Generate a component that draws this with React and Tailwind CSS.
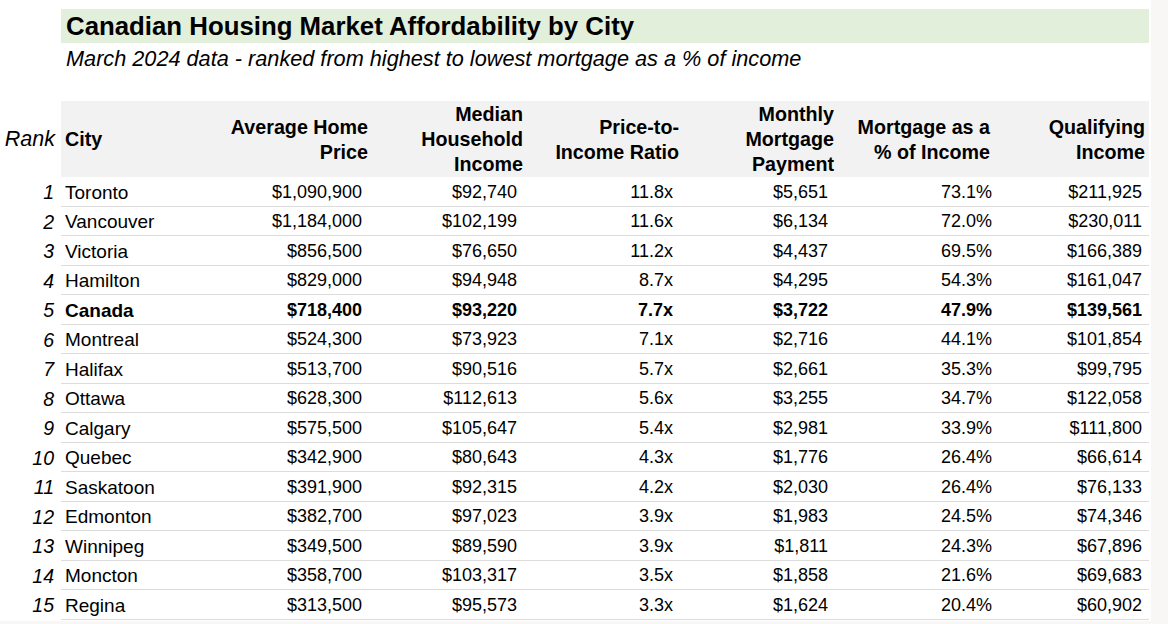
import React from 'react';

const rows = [
  [1, 'Toronto', '$1,090,900', '$92,740', '11.8x', '$5,651', '73.1%', '$211,925'],
  [2, 'Vancouver', '$1,184,000', '$102,199', '11.6x', '$6,134', '72.0%', '$230,011'],
  [3, 'Victoria', '$856,500', '$76,650', '11.2x', '$4,437', '69.5%', '$166,389'],
  [4, 'Hamilton', '$829,000', '$94,948', '8.7x', '$4,295', '54.3%', '$161,047'],
  [5, 'Canada', '$718,400', '$93,220', '7.7x', '$3,722', '47.9%', '$139,561'],
  [6, 'Montreal', '$524,300', '$73,923', '7.1x', '$2,716', '44.1%', '$101,854'],
  [7, 'Halifax', '$513,700', '$90,516', '5.7x', '$2,661', '35.3%', '$99,795'],
  [8, 'Ottawa', '$628,300', '$112,613', '5.6x', '$3,255', '34.7%', '$122,058'],
  [9, 'Calgary', '$575,500', '$105,647', '5.4x', '$2,981', '33.9%', '$111,800'],
  [10, 'Quebec', '$342,900', '$80,643', '4.3x', '$1,776', '26.4%', '$66,614'],
  [11, 'Saskatoon', '$391,900', '$92,315', '4.2x', '$2,030', '26.4%', '$76,133'],
  [12, 'Edmonton', '$382,700', '$97,023', '3.9x', '$1,983', '24.5%', '$74,346'],
  [13, 'Winnipeg', '$349,500', '$89,590', '3.9x', '$1,811', '24.3%', '$67,896'],
  [14, 'Moncton', '$358,700', '$103,317', '3.5x', '$1,858', '21.6%', '$69,683'],
  [15, 'Regina', '$313,500', '$95,573', '3.3x', '$1,624', '20.4%', '$60,902'],
];

const cols = 'grid grid-cols-[150px_161px_155px_156px_155px_156px_155px] w-[1088px]';

const App = () => {
  return (
    <div className="w-[1168px] h-[624px] overflow-hidden flex bg-[#f8f7f6] font-['Liberation_Sans',Arial,sans-serif] text-black">
      <div className="w-[1151px] flex flex-col">
        <div className="bg-white pt-[9px] pb-[28px]">
          {/* Title */}
          <div className="ml-[61px] w-[1088px] h-[34px] bg-[#e2efda] pl-[5px] text-[25.8px] font-bold leading-[35px]">
            Canadian Housing Market Affordability by City
          </div>
          <div className="ml-[66px] h-[30px] text-[21.7px] italic leading-[31px]">
            March 2024 data - ranked from highest to lowest mortgage as a % of income
          </div>
        </div>

        {/* Header */}
        <div className="flex bg-white leading-[25px]">
          <div className="w-[61px] h-[76px] flex items-center justify-end pr-[6px] pt-[1px] italic text-[21.5px]">Rank</div>
          <div className={`${cols} h-[76px] pt-[1px] bg-[#f2f2f2] font-bold items-center text-[19.7px]`}>
            <div className="pl-[4px]">City</div>
            <div className="text-right pr-[4px]">Average Home<br />Price</div>
            <div className="text-right pr-[4px]">Median<br />Household<br />Income</div>
            <div className="text-right pr-[4px]">Price-to-<br />Income Ratio</div>
            <div className="text-right pr-[4px]">Monthly<br />Mortgage<br />Payment</div>
            <div className="text-right pr-[4px]">Mortgage as a<br />% of Income</div>
            <div className="text-right pr-[4px]">Qualifying<br />Income</div>
          </div>
        </div>

        {/* Rows */}
        {rows.map((r) => {
          const bold = r[1] === 'Canada' ? 'font-bold' : '';
          return (
            <div key={r[0]} className="flex bg-white leading-[25px]">
              <div className="w-[61px] h-[29.5px] pt-[2px] flex items-center justify-end pr-[7px] italic text-[19.5px]">{r[0]}</div>
              <div className={`${cols} h-[29.5px] pt-[2px] items-center border-b border-[#dcdcdc] text-[18px] ${bold}`}>
                <div className="pl-[4px] text-[19px]">{r[1]}</div>
                <div className="text-right pr-[10px]">{r[2]}</div>
                <div className="text-right pr-[10px]">{r[3]}</div>
                <div className="text-right pr-[10px]">{r[4]}</div>
                <div className="text-right pr-[10px]">{r[5]}</div>
                <div className="text-right pr-[2px]">{r[6]}</div>
                <div className="text-right pr-[7px]">{r[7]}</div>
              </div>
            </div>
          );
        })}
        <div className="bg-white h-[1px]" />
      </div>
    </div>
  );
};

export default App;
